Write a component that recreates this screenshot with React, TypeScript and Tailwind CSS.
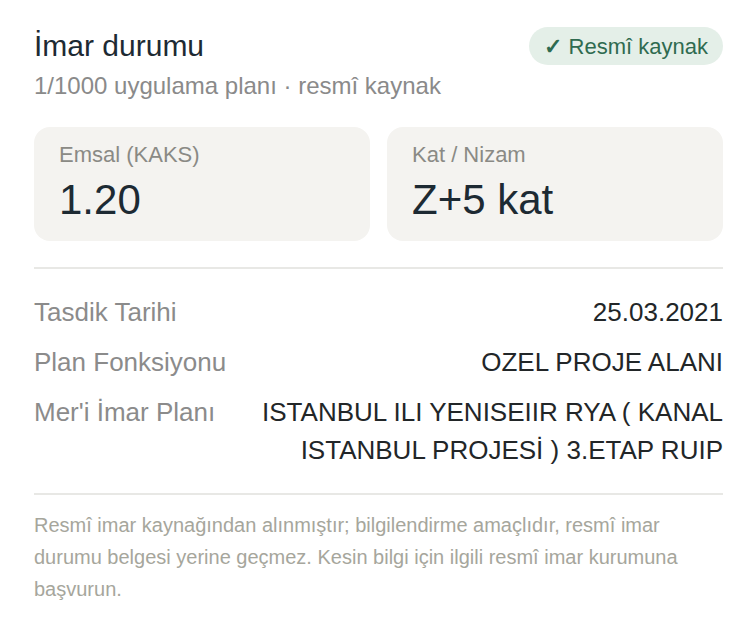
import React from "react";

type Row = {
  label: string;
  value: string;
};

const rows: Row[] = [
  { label: "Tasdik Tarihi", value: "25.03.2021" },
  { label: "Plan Fonksiyonu", value: "OZEL PROJE ALANI" },
  {
    label: "Mer'i İmar Planı",
    value: "ISTANBUL ILI YENISEIIR RYA ( KANAL ISTANBUL PROJESİ ) 3.ETAP RUIP",
  },
];

function StatCard({ label, value }: { label: string; value: string }) {
  return (
    <div className="flex-1 rounded-[16px] bg-[#f4f3f0] pl-[25px] pt-[14px] pb-[17px]">
      <div className="text-[22px] leading-[28px] text-[#8a8a85]">{label}</div>
      <div className="mt-[7px] text-[42px] leading-[48px] text-[#1d2a33]">{value}</div>
    </div>
  );
}

export default function App() {
  return (
    <div
      className="min-h-[638px] w-[750px] bg-white"
      style={{ fontFamily: '"Liberation Sans", Arial, sans-serif' }}
    >
      <div className="pl-[34px] pr-[27px] pt-[27px] pb-[30px]">
        {/* header */}
        <div className="flex items-start justify-between">
          <div>
            <h1 className="mt-[1px] text-[30px] leading-[36px] text-[#1d2a33]">İmar durumu</h1>
            <p className="mt-[7px] text-[24px] leading-[30px] text-[#8a8a8a]">
              1/1000 uygulama planı · resmî kaynak
            </p>
          </div>
          <span className="flex h-[38px] items-center rounded-full bg-[#e4efe8] px-[15px] text-[22px] text-[#2f6b50]">
            <span className="mr-[7px] font-bold">✓</span>Resmî kaynak
          </span>
        </div>

        {/* cards */}
        <div className="mt-[26px] flex gap-[17px]">
          <StatCard label="Emsal (KAKS)" value="1.20" />
          <StatCard label="Kat / Nizam" value="Z+5 kat" />
        </div>

        <div className="mt-[26px] h-[2px] bg-[#e8e8e5]" />

        {/* details */}
        <div className="mt-[24px] flex flex-col gap-[12px]">
          {rows.map((r) => (
            <div key={r.label} className="flex justify-between gap-[44px] text-[26px] leading-[38px]">
              <div className="shrink-0 text-[#8b8b8b]">{r.label}</div>
              <div className="text-right text-[#222628]">{r.value}</div>
            </div>
          ))}
        </div>

        <div className="mt-[24px] h-[2px] bg-[#e8e8e5]" />

        <p className="mt-[14px] max-w-[655px] text-[20px] leading-[32px] text-[#a6a69c]">
          Resmî imar kaynağından alınmıştır; bilgilendirme amaçlıdır, resmî imar durumu belgesi
          yerine geçmez. Kesin bilgi için ilgili resmî imar kurumuna başvurun.
        </p>
      </div>
    </div>
  );
}
